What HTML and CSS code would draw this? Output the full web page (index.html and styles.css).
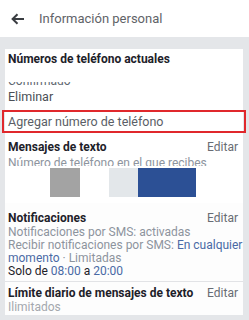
FILE: index.html
```html
<!DOCTYPE html>
<html lang="es">
<head>
    <meta charset="UTF-8">
    <title>Información personal</title>
    <link rel="stylesheet" href="styles.css">
</head>
<body>
<header class="top-bar">
    <svg class="back-icon" width="14" height="12" viewBox="0 0 14 12">
        <path d="M13 6H2M6.5 1.2L1.6 6l4.9 4.8" fill="none" stroke="#3a3d42" stroke-width="2"/>
    </svg>
    <span class="top-title">Información personal</span>
</header>

<main class="page">
    <section class="card">
        <div class="phones">
            <h2 class="section-title">Números de teléfono actuales</h2>
            <div class="clip-top"><span>Confirmado</span></div>
            <div class="link-row">Eliminar</div>
            <div class="add-phone">Agregar número de teléfono</div>
            <div class="row-head">
                <h3 class="section-title">Mensajes de texto</h3>
                <span class="edit">Editar</span>
            </div>
            <div class="clip-bottom">Número de teléfono en el que recibes</div>
        </div>

        <div class="swatches">
            <div class="swatch grey"></div>
            <div class="swatch pale"></div>
            <div class="swatch blue"></div>
        </div>

        <div class="settings">
            <div class="block">
                <div class="row-head">
                    <h3 class="section-title">Notificaciones</h3>
                    <span class="edit">Editar</span>
                </div>
                <p class="info">Notificaciones por SMS: activadas</p>
                <p class="info nowrap">Recibir notificaciones por SMS: <span class="accent">En cualquier</span><br><span class="accent">momento</span> · Limitadas</p>
                <p class="info dark">Solo de <span class="accent">08:00</span> a <span class="accent">20:00</span></p>
            </div>
            <div class="block last">
                <div class="row-head">
                    <h3 class="section-title">Límite diario de mensajes de texto</h3>
                    <span class="edit">Editar</span>
                </div>
                <p class="info light">Ilimitados</p>
            </div>
        </div>
    </section>
</main>
</body>
</html>
```

FILE: styles.css
```css
body {
    margin: 0;
    width: 249px;
    height: 320px;
    overflow: hidden;
    background-color: #e4e6e9;
    font-family: Roboto, "Liberation Sans", Arial, sans-serif;
    color: #1d2129;
}

/* Top bar */
.top-bar {
    height: 37px;
    background-color: #fff;
    display: flex;
    align-items: center;
    gap: 14px;
    padding-left: 11px;
}

.back-icon {
    display: block;
}

.top-title {
    font-size: 13px;
    color: #5f6368;
}

.page {
    padding: 12px 6px 0 5px;
}

.card {
    background-color: #fff;
}

.phones {
    padding: 0 5px 0 3px;
}

.section-title {
    margin: 0;
    font-size: 12px;
    font-weight: bold;
    color: #1d2129;
}

.phones > .section-title {
    line-height: 20px;
}

.clip-top {
    height: 6px;
    margin-top: 13px;
    overflow: hidden;
    font-size: 12px;
    line-height: 14px;
    color: #606770;
}

.clip-top span {
    display: block;
    margin-top: -8px;
}

.link-row {
    margin-top: 2px;
    font-size: 12.5px;
    line-height: 14px;
    color: #4b4f56;
}

/* Highlighted row */
.add-phone {
    margin: 6px -8px 0 -6px;
    padding: 1px 4px 0;
    border: 2px solid #e0282c;
    font-size: 12.5px;
    line-height: 18px;
    color: #5a5e66;
}

.row-head {
    display: flex;
    justify-content: space-between;
    align-items: center;
    line-height: 16px;
}

.phones .row-head {
    margin-top: 5px;
    line-height: 18px;
}

.edit {
    font-size: 12px;
    color: #686c73;
}

.clip-bottom {
    height: 10px;
    overflow: hidden;
    font-size: 12px;
    line-height: 14px;
    color: #8d949e;
}

/* Picture strip */
.swatches {
    display: flex;
    height: 37px;
    padding-top: 2px;
    box-sizing: border-box;
    margin-left: -5px;
}

.swatch {
    height: 29px;
}

.grey {
    width: 30px;
    margin-left: 50px;
    background-color: #a3a3a3;
}

.pale {
    width: 29px;
    margin-left: 29px;
    background-color: #e3e7ea;
}

.blue {
    width: 58px;
    background-color: #2c5095;
}

/* Settings blocks */
.settings {
    background-color: #fdfdfd;
}

.block {
    padding: 7px 5px 3px 3px;
    border-bottom: 1px solid #e2e3e6;
}

.block.last {
    padding-top: 3px;
    padding-bottom: 1px;
    border-bottom: none;
}

.info {
    margin: 0;
    font-size: 12px;
    line-height: 13px;
    color: #8d949e;
}

.info.nowrap {
    white-space: nowrap;
}

.info.dark {
    color: #1d2129;
}

.info.light {
    color: #a4a8ae;
}

.accent {
    color: #4a6aa5;
}
```
